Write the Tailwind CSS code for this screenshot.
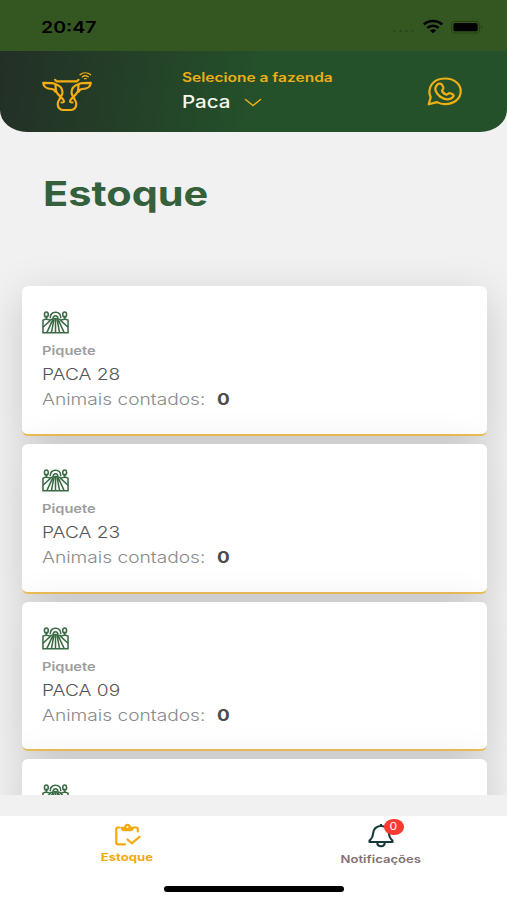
<!DOCTYPE html>
<html lang="pt-BR">
<head>
  <meta charset="UTF-8" />
  <meta name="viewport" content="width=device-width, initial-scale=1.0"/>
  <title>Estoque</title>
  <script src="https://cdn.jsdelivr.net/npm/@tailwindcss/browser@4"></script>
</head>
<body class="h-[900px] overflow-hidden flex flex-col bg-[#f1f1f1] font-['Inter','Liberation_Sans',sans-serif]">

  <!-- Icon shared by every card -->
  <svg class="hidden">
    <symbol id="field" viewBox="0 0 28 24" preserveAspectRatio="none">
      <g fill="none" stroke="#3b6b45" stroke-width="1.6">
        <path d="M1 22.800V9.500c2-1 5-1 7 0 4-2.200 8-2.200 12 0 2-1 5-1 7 0v13.300z"/>
        <path d="M8.500 7.500C8.500 3.500 11 1.400 14 1.400s5.500 2.100 5.500 6.100M11.500 7.500c.3-2 1.300-2.500 2.500-2.500s2.200.5 2.500 2.500"/>
        <ellipse cx="4.500" cy="3.700" rx="2" ry="2.700"/>
        <ellipse cx="23.500" cy="3.700" rx="2" ry="2.700"/>
        <path d="M4.500 5v4.500M23.500 5v4.500M1 17l8-7.500M5 22.500l6.500-14M9.800 22.500l2.600-14M14 22.500V8M18.200 22.500L15.600 8.500M23 22.500l-6.500-14M27 17l-8-7.500"/>
      </g>
    </symbol>
  </svg>

  <!-- Status bar -->
  <div class="h-[51px] shrink-0 bg-[#345722] flex justify-between pl-[41px] pr-[24px]">
    <span class="mt-[17px] leading-5 text-[16px] font-semibold text-black origin-left scale-x-[1.22]">20:47</span>
    <div class="mt-[19px] flex gap-[8px]">
      <svg class="mt-[10px] w-[23px] h-[4px]" viewBox="0 0 23 4" fill="#27431a">
        <circle cx="2.500" cy="2" r="1.100"/><circle cx="8.500" cy="2" r="1.100"/><circle cx="14.500" cy="2" r="1.100"/><circle cx="20.500" cy="2" r="1.100"/>
      </svg>
      <svg class="w-[20px] h-[15px]" viewBox="0 0 20 15" fill="none" stroke="#000" stroke-width="2.500">
        <path d="M.8 5.500C6 .9 14 .9 19.200 5.500"/>
        <path d="M4.300 8.900c3.300-3 8.100-3 11.400 0"/>
        <path d="M10 14.200L6.800 11.500c1.900-1.600 4.500-1.600 6.400 0z" fill="#000" stroke="none"/>
      </svg>
      <svg class="w-[32px] h-[15px]" viewBox="0 0 33 15">
        <rect x=".7" y="2.300" width="28.600" height="12" rx="3.500" fill="none" stroke="#24400f"/>
        <rect x="2.500" y="4" width="25" height="8.500" rx="2" fill="#000"/>
        <path d="M31 6.300v4c1.300-.6 1.300-3.400 0-4z" fill="#24400f"/>
      </svg>
    </div>
  </div>

  <!-- Header -->
  <header class="h-[81px] shrink-0 flex rounded-[0_0_27px_27px/0_0_22px_22px] bg-[linear-gradient(100deg,#232f26_0%,#24502a_50%)]">
    <svg class="ml-[42px] mt-[20px] w-[50px] h-[41px]" viewBox="0 0 50 41" fill="none" stroke="#f5ad12" stroke-width="2.200" stroke-linejoin="round" stroke-linecap="round">
      <path d="M13 8.800l1.500 1.500H35l1.500-1.500"/>
      <path d="M19.500 31.500c2.500 0 3-1 2-2.500-2-3-5.500-5-7-8-1.500-3-.2-6-1.500-8-1.500-1.300-6-1.200-11.800-1.200.3 3.500 3.300 6.200 8.300 6.200 2 0 3 1 3.700 2.500M13 13c5 1.500 7.500 4.500 7.500 8.500 0 3-2.800 5-3.300 7.500C15 31 15.500 35 17 37c1 1.300 2.500 2 4 2h8c1.500 0 3-.7 4-2 1.500-2 2-6-.2-8-.5-2.500-3.300-4.500-3.300-7.500 0-4 2.500-7 7.500-8.500"/>
      <path d="M30.500 31.500c-2.500 0-3-1-2-2.500 2-3 5.500-5 7-8 1.500-3 .2-6 1.500-8 1.500-1.300 6-1.200 11.800-1.200-.3 3.500-3.300 6.200-8.300 6.200-2 0-3 1-3.700 2.500"/>
      <path d="M38 3.700c3.100-2.500 7.500-2.500 10.600 0M40.200 5.900c1.900-1.400 4.300-1.400 6.200 0M42.500 7.700h1.700" stroke-width="1.300"/>
    </svg>
    <div class="ml-[90px] mt-[16.500px] flex flex-col items-start">
      <span class="leading-5 text-[12.5px] font-semibold text-[#eeae15] origin-left scale-x-[1.24] whitespace-nowrap">Selecione a fazenda</span>
      <div class="mt-[2.500px] flex items-center">
        <span class="w-[62px] leading-6 text-[17px] font-medium text-[#f4f8f2]"><span class="inline-block origin-left scale-x-[1.21]">Paca</span></span>
        <svg class="mt-[1px] w-[18px] h-[9px]" viewBox="0 0 18 9" fill="none" stroke="#eeae15" stroke-width="1.500" stroke-linecap="round"><path d="M1.500 1.500L9 7.500l7.500-6"/></svg>
      </div>
    </div>
    <svg class="ml-auto mr-[45px] mt-[26px] w-[35px] h-[29px]" viewBox="0 0 35 29" fill="none" stroke="#f0b014" stroke-width="2.200" stroke-linejoin="round">
      <path d="M1.700 27.300l2-7C-.5 11 6 1.500 18 1.500c9.500 0 15.700 5.700 15.700 12.800S27.500 27.100 18 27.100c-3 0-5.500-.6-8-2z"/>
      <path d="M10 8c-3.500 3.500-1 8.500 3 11.500 4.500 3.500 11 4 13.500-.2.600-1.600-.3-2-3.500-3-1.500-.5-2 1-3.500 1.300-2-.5-4-2.300-4.500-4 1-1.300 1.800-1.800 1.300-3.200-1.300-3-1.800-3.900-3.800-3.700-1 .1-2 .6-2.500 1.300z"/>
    </svg>
  </header>

  <!-- Stock list -->
  <main class="h-[662.500px] shrink-0 overflow-hidden px-[21px]">
    <h1 class="mt-[39.500px] ml-[21.500px] h-[44px] leading-[44px] text-[34px] font-bold text-[#34603b] origin-left scale-x-[1.22] w-[160px]">Estoque</h1>
    <div id="cards" class="mt-[70.700px] ml-[.5px] flex flex-col gap-[8px]"></div>
  </main>

  <template id="card">
    <section class="h-[149.700px] shrink-0 w-[465px] rounded-[6px] bg-white border-b-2 border-[#ebbf58] shadow-[0_11px_44px_rgba(0,0,0,0.17)] pl-[20.500px] pt-[25px] flex flex-col items-start whitespace-nowrap">
      <svg class="w-[27px] h-[23px]"><use href="#field"/></svg>
      <div class="details mt-[8px] flex flex-col items-start">
        <span class="leading-[18px] text-[12px] font-semibold text-[#9d9d9d] origin-left scale-x-[1.22]">Piquete</span>
        <span class="name mt-[2px] leading-6 text-[16.500px] font-light text-[#555] origin-left scale-x-[1.16]"></span>
        <div class="mt-[1px] leading-6 text-[16.500px] flex">
          <span class="w-[175px] font-light text-[#8a8a8a]"><span class="inline-block origin-left scale-x-[1.16]">Animais contados:</span></span>
          <span class="font-bold text-[#4d4d4d] origin-left scale-x-[1.15]">0</span>
        </div>
      </div>
    </section>
  </template>

  <!-- Tab bar -->
  <nav class="mt-[21.500px] h-[84px] shrink-0 bg-white relative grid grid-cols-2">
    <div class="flex flex-col items-center pl-[1px] text-[#f5a911]">
      <svg class="mt-[7px] w-[27px] h-[24px]" viewBox="0 0 27 24" fill="none" stroke="currentColor" stroke-width="2.200" stroke-linecap="round" stroke-linejoin="round">
        <path d="M5.500 4.500H4Q2.300 4.500 2.300 6V19.500q0 1.800 1.800 1.800H11M20 4.500h2q1.800 0 1.800 1.500V8.500"/>
        <path d="M6.500 3.700h3.500c1-4 6-4 7 0H20c0 3-1.500 4.500-3.500 4.500h-6.500C8 8.200 6.500 6.700 6.500 3.700z" fill="currentColor" stroke="none"/>
        <circle cx="13.500" cy="3.900" r="1" fill="#fff" stroke="none"/>
        <path d="M13.500 16.500l4.200 3.800 7.800-6.500"/>
      </svg>
      <span class="mt-[2px] leading-4 text-[11px] font-bold scale-x-[1.19]">Estoque</span>
    </div>
    <div class="flex flex-col items-center pl-[1.500px] text-[#857072]">
      <div class="relative mt-[8px]">
        <svg class="w-[26px] h-[24px]" viewBox="0 0 26 24" fill="none" stroke="#17383a" stroke-width="2.100" stroke-linejoin="round">
          <path d="M13 1.800C8 2.300 5.300 5 5 10c-.2 4-1.500 4.500-3.500 6.500v1.500h23v-1.500c-2-2-3.300-2.500-3.500-6.500-.3-5-3-7.700-8-8.200zM13 0v3"/>
          <path d="M9.300 18.500c0 5 7.400 5 7.400 0"/>
        </svg>
        <span class="absolute left-[16px] -top-[5px] w-[19.500px] h-[15.500px] rounded-[50%] bg-[#fc3a30] text-white text-[10.500px] leading-[15.500px] text-center"><span class="inline-block scale-x-[1.15]">0</span></span>
      </div>
      <span class="mt-[2.500px] leading-4 text-[11px] font-semibold scale-x-[1.19]">Notificações</span>
    </div>
    <div class="absolute left-[164px] top-[70px] w-[180px] h-[6px] rounded-full bg-black"></div>
  </nav>

  <script>
    // the last card only peeks in above the tab bar, so it has no details
    const paddocks = ["PACA 28", "PACA 23", "PACA 09", null];
    const list = document.getElementById("cards");
    const template = document.getElementById("card");

    paddocks.forEach(name => {
      const card = template.content.cloneNode(true);
      if (name) {
        card.querySelector(".name").innerText = name;
      } else {
        card.querySelector(".details").remove();
      }
      list.appendChild(card);
    });
  </script>

</body>
</html>
